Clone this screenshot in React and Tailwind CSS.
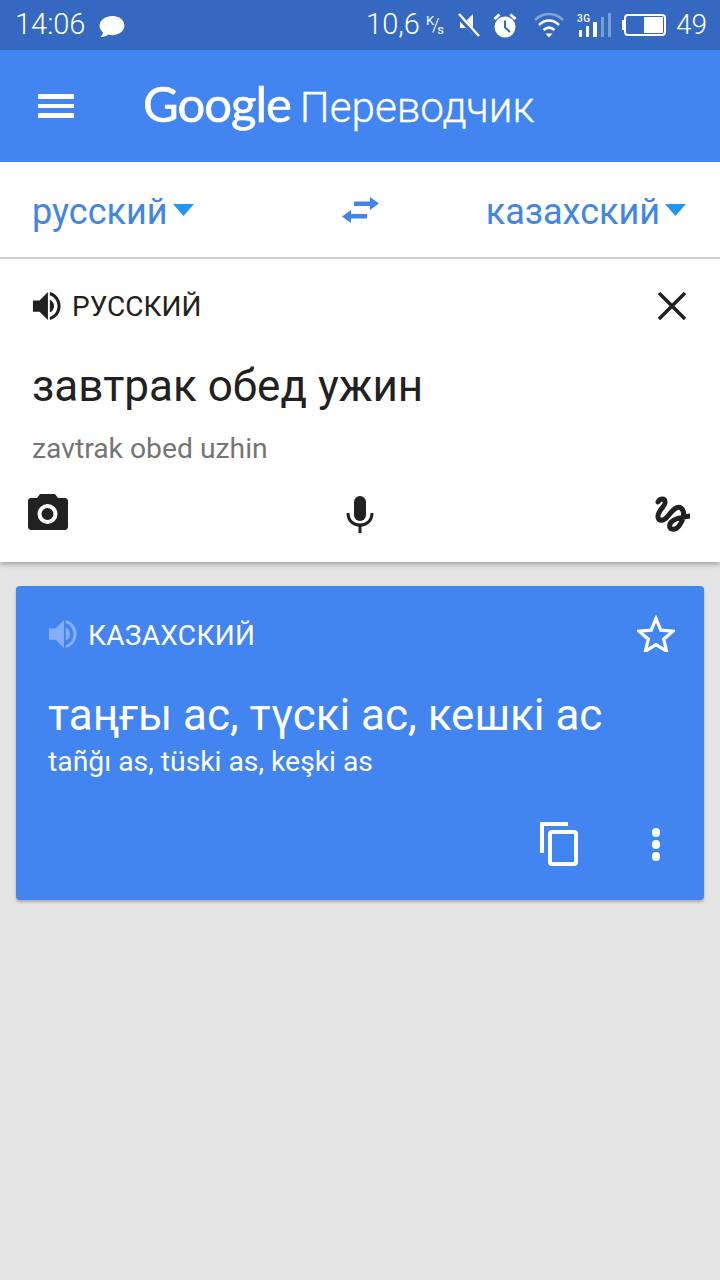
import React from 'react';

const Speaker = ({ className }) => (
  <svg viewBox="0 0 32 32" className={className} fill="currentColor">
    <path d="M1 10h7l9-9v30l-9-9H1z" />
    <path d="M19 9c2.800 1.300 4.500 3.900 4.500 7s-1.700 5.700-4.500 7z" />
    <path d="M19 1c6.500 1.500 11.500 7.500 11.500 15S25.500 29.500 19 31v-3.400c4.800-1.400 8.200-6 8.200-11.600S23.800 5.800 19 4.400z" />
  </svg>
);

const Caret = () => (
  <svg viewBox="0 0 21 12" className="w-[21px] h-3 mt-[1px] ml-[5px]" fill="#2196f3">
    <path d="M0 0h21L10.500 12z" />
  </svg>
);

const StatusBar = () => (
  <div className="h-[50px] bg-[#3569c1] text-white flex items-center pl-[15px] pr-[13px] text-[29px] font-light">
    <span>14:06</span>
    <svg viewBox="0 0 28 24" className="w-[27px] h-[23px] ml-[13px] mt-[2px]" fill="white">
      <path d="M15 1c7 0 12.500 4.400 12.500 10S22 21 15 21c-1.500 0-3-.2-4.300-.6C8.900 22 6 23.200 2.500 23c1.300-1.200 2.300-3 2.600-5C2.600 16.200 1.500 13.800 1.500 11 1.500 5.400 8 1 15 1z" />
    </svg>
    <span className="ml-auto">10,6</span>
    <span className="ml-[6px] w-[18px] h-[22px] relative text-[13px] leading-none font-normal">
      <span className="absolute left-0 top-0">K</span>
      <span className="absolute left-[6px] top-[1px] text-[19px] font-light">/</span>
      <span className="absolute right-0 bottom-0">s</span>
    </span>
    <svg viewBox="0 0 22 24" className="w-[22px] h-6 ml-[14px]" fill="white">
      <path d="M2 8h6l7-7v21l-7-7H2z" />
      <path d="M-1 1L20 24" stroke="#3569c1" strokeWidth="5.500" />
      <path d="M1 1l20 22" stroke="white" strokeWidth="2.500" />
    </svg>
    <svg viewBox="0 0 24 25" className="w-6 h-[25px] ml-[13px]">
      <circle cx="12" cy="14" r="10.500" fill="white" />
      <path d="M12 7.500v7l5 4.500" stroke="#3569c1" strokeWidth="2" fill="none" />
      <path d="M1.500 6l5-4.500M22.500 6l-5-4.500" stroke="white" strokeWidth="3" />
    </svg>
    <svg viewBox="0 0 30 26" className="w-[30px] h-[26px] ml-[17px]" fill="none">
      <path d="M1 8C9 0 21 0 29 8" stroke="white" strokeOpacity="0.4" strokeWidth="2.500" />
      <path d="M5 13c6-6 14-6 20 0" stroke="white" strokeWidth="2.500" />
      <path d="M9.500 18c3.500-3 7.500-3 11 0" stroke="white" strokeWidth="2.500" />
      <path d="M11.500 21.500h7L15 25.500z" fill="white" />
    </svg>
    <svg viewBox="0 0 34 24" className="w-[34px] h-6 ml-[13px]" fill="white">
      <text x="0" y="9" fontSize="10" fontFamily="Roboto, sans-serif" fontWeight="500" letterSpacing="0.500">3G</text>
      <rect x="2" y="17" width="3" height="7" />
      <rect x="9" y="13" width="3" height="11" />
      <rect x="16" y="9" width="4" height="15" />
      <rect x="24" y="4" width="3" height="20" opacity="0.35" />
      <rect x="31" y="0" width="3" height="24" opacity="0.35" />
    </svg>
    <div className="ml-[11px] flex items-center">
      <div className="w-[2px] h-[10px] bg-white" />
      <div className="w-[42px] h-[22px] border-2 border-white rounded-[4px] flex justify-end items-center pr-[1px]">
        <div className="w-[19px] h-4 bg-white" />
      </div>
    </div>
    <span className="ml-[10px] text-[28px]">49</span>
  </div>
);

const Header = () => (
  <div className="h-[112px] bg-[#4285f0] text-white flex items-center">
    <div className="ml-[38px] w-9 flex flex-col gap-[5px]">
      <div className="h-[4.500px] bg-white" />
      <div className="h-[4.500px] bg-white" />
      <div className="h-[4.500px] bg-white" />
    </div>
    <div className="ml-[69px] mt-[-5px] flex items-baseline">
      <span className="text-[49px] font-['Lato',sans-serif] font-normal tracking-[-1px] [-webkit-text-stroke:0.6px_white]">Google</span>
      <span className="ml-[9px] text-[42.200px] font-light [-webkit-text-stroke:0.3px_white]">Переводчик</span>
    </div>
  </div>
);

const LangBar = () => (
  <div className="h-[97px] bg-white border-b-2 border-[#d6d6d6] grid grid-cols-[1fr_auto_1fr] items-center pl-8 pr-[34px] text-[#4285e4] text-[36px]">
    <div className="flex items-center">
      <span className="pt-1">русский</span>
      <Caret />
    </div>
    <svg viewBox="0 0 37 26" className="w-[37px] h-[26px] ml-[3px]" fill="#4285e4">
      <path d="M28 0l9 6.500-9 6.500V9H12V4.500h16z" />
      <path d="M9 13l-9 6.500L9 26v-4.500h16V17H9z" />
    </svg>
    <div className="flex items-center justify-self-end">
      <span className="pt-1">казахский</span>
      <Caret />
    </div>
  </div>
);

const InputPanel = () => (
  <div className="h-[303px] bg-white shadow-[0_2px_5px_rgba(0,0,0,0.3)] text-[#212121]">
    <div className="flex items-center pl-8 pr-[33px] pt-[18px] h-[76px]">
      <Speaker className="w-[30px] h-[30px] text-[#212121]" />
      <span className="ml-[10px] mt-[2px] text-[28px] leading-none">РУССКИЙ</span>
      <svg viewBox="0 0 30 30" className="w-[30px] h-[30px] ml-auto" stroke="#212121" strokeWidth="3.500" fill="none">
        <path d="M2 2l26 26M28 2L2 28" />
      </svg>
    </div>
    <div className="pl-8 mt-[23px] text-[44px] leading-[56px]">завтрак обед ужин</div>
    <div className="pl-8 mt-[19px] text-[28.300px] leading-[32px] text-[#757575]">zavtrak obed uzhin</div>
    <div className="flex items-start justify-between pl-7 pr-[30px] mt-[29px]">
      <svg viewBox="0 0 40 36" className="w-10 h-9" fill="#212121">
        <path d="M12 0h15l3 4h7c1.700 0 3 1.300 3 3v26c0 1.400-1.300 3-3 3H3c-1.700 0-3-1.600-3-3V7c0-1.700 1.300-3 3-3h6z" />
        <circle cx="19.500" cy="20" r="8" fill="none" stroke="white" strokeWidth="4" />
      </svg>
      <svg viewBox="0 0 28 37" className="w-7 h-[37px] mt-[2px] ml-[-2px]" fill="#212121">
        <rect x="8" y="0" width="12" height="25" rx="6" />
        <path d="M2 17c0 7.500 5 12 12 12s12-4.500 12-12" fill="none" stroke="#212121" strokeWidth="3" />
        <rect x="12.500" y="28" width="3" height="9" />
      </svg>
      <svg viewBox="0 0 36 36" className="w-9 h-9 mt-[2px]" fill="none" stroke="#212121" strokeWidth="5" strokeLinecap="round" strokeLinejoin="round">
        <path d="M4 6C6 2 11 2 11 6 12 10 3 15 4 21 5 26 10 25 14 20 18 15 23 9 27 12 32 16 29 25 25 30 21 35 14 34 16 28 18 23 28 21 36 20" />
      </svg>
    </div>
  </div>
);

const ResultCard = () => (
  <div className="mx-4 mt-6 h-[314px] bg-[#4285f0] rounded-[4px] shadow-[0_2px_3px_rgba(0,0,0,0.25)] text-white">
    <div className="flex items-center pl-8 pr-[29px] pt-[31px] h-[64px]">
      <Speaker className="w-[30px] h-[30px] text-white/35" />
      <span className="ml-[10px] mt-1 text-[28px] leading-none tracking-[0.300px]">КАЗАХСКИЙ</span>
      <svg viewBox="0 0 38 37" className="w-[38px] h-[37px] ml-auto" fill="none" stroke="white" strokeWidth="3.200">
        <path d="M19 3.500l4.800 11.700 12.200 1-9.300 8 2.900 12L19 29.700 8.400 36.200l2.900-12-9.300-8 12.200-1z" />
      </svg>
    </div>
    <div className="pl-8 mt-[37px] text-[44px] leading-[56px]">таңғы ас, түскі ас, кешкі ас</div>
    <div className="pl-8 mt-[1px] text-[28.300px] leading-[36px]">tañğı as, tüski as, keşki as</div>
    <div className="flex items-start justify-end pr-[44px] mt-[42px]">
      <svg viewBox="0 0 38 44" className="w-[38px] h-11" fill="none" stroke="white" strokeWidth="4">
        <path d="M2 31V2h26" />
        <rect x="10" y="10" width="26" height="32" rx="2" />
      </svg>
      <div className="ml-[74px] mt-[6px] flex flex-col gap-[3.500px]">
        <div className="w-[8.500px] h-[8.500px] rounded-full bg-white" />
        <div className="w-[8.500px] h-[8.500px] rounded-full bg-white" />
        <div className="w-[8.500px] h-[8.500px] rounded-full bg-white" />
      </div>
    </div>
  </div>
);

export default function App() {
  return (
    <div className="w-[720px] h-[1280px] bg-[#e4e4e4] font-['Roboto',sans-serif] overflow-hidden">
      <StatusBar />
      <Header />
      <LangBar />
      <InputPanel />
      <ResultCard />
    </div>
  );
}
